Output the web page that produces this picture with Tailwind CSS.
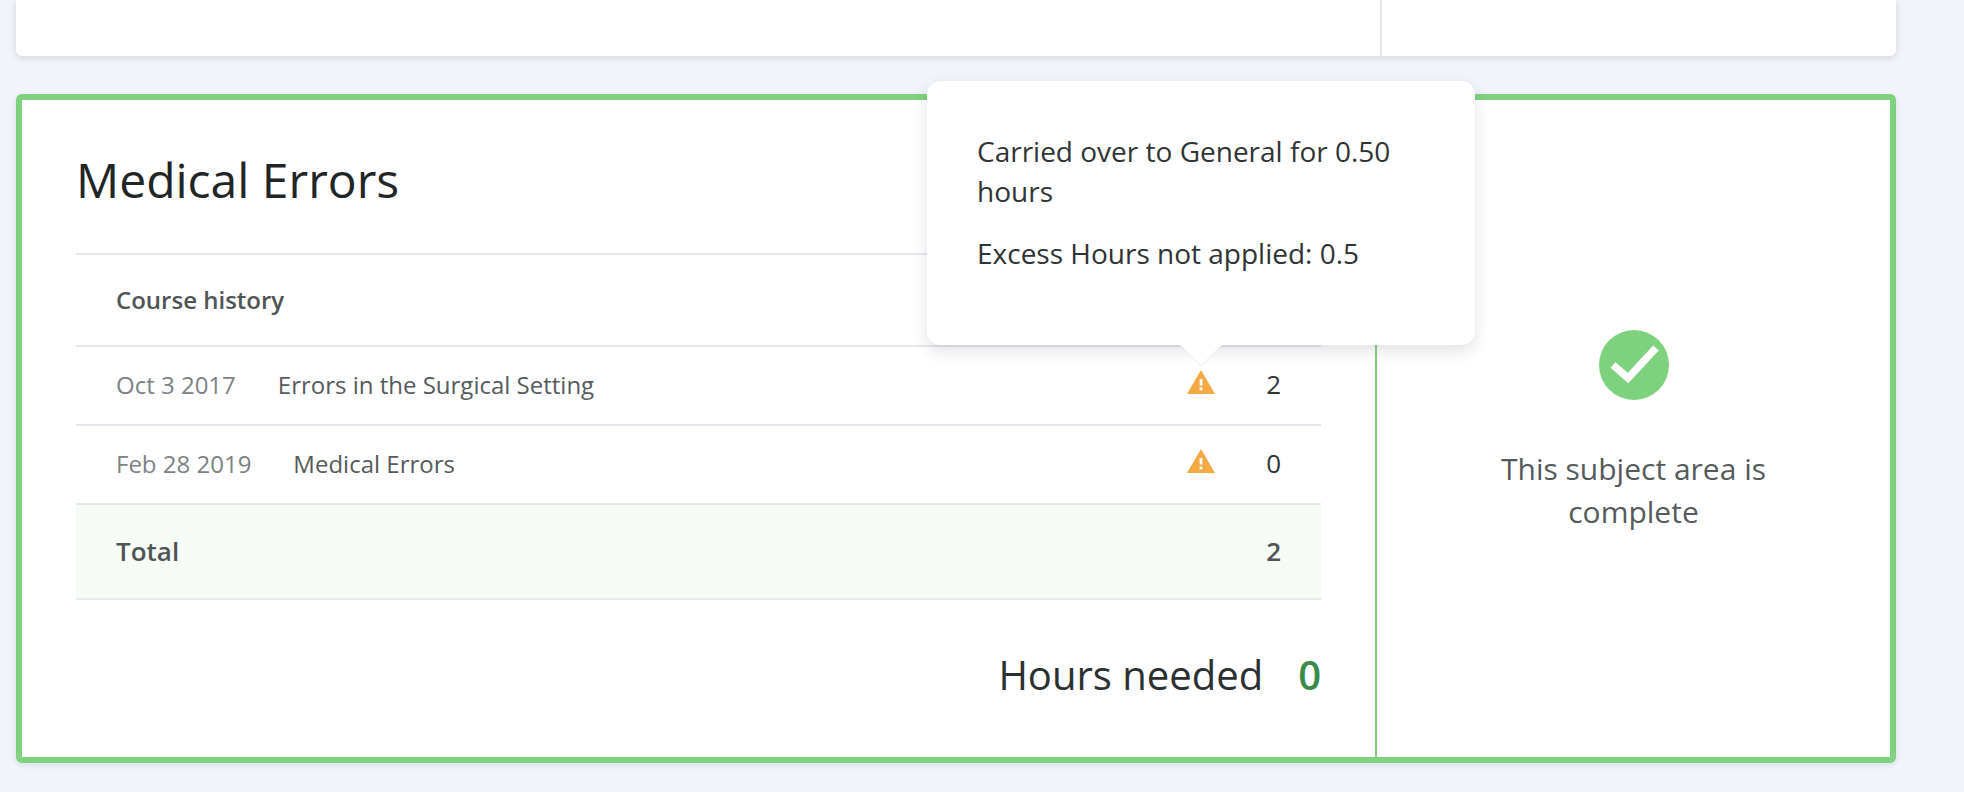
<!DOCTYPE html>
<html lang="en">
  <head>
    <meta charset="UTF-8" />
    <title>Medical Errors</title>
    <script src="https://cdn.jsdelivr.net/npm/@tailwindcss/browser@4"></script>
  </head>
  <body class="bg-[#f1f4f9] font-['Open_Sans',sans-serif] overflow-hidden">
    <div class="pl-4 pr-[68px] pb-[29px]">
      <!-- card above, scrolled off the top -->
      <div class="h-[56px] bg-white rounded-b-md shadow-[0_2px_6px_rgba(50,60,90,0.16)] flex">
        <div class="w-[1366px] border-r-2 border-[#e6e8ee]"></div>
      </div>

      <div class="relative mt-[38px] h-[669px] bg-white border-[6px] border-[#7ed27e] rounded-md shadow-[0_2px_6px_rgba(50,60,90,0.12)] flex">
        <div class="w-[1355px] border-r-2 border-[#7ed27e] px-[54px] shrink-0">
          <h1 class="h-[153px] pt-[49px] text-[48px] leading-[62px] text-[#212526]">Medical Errors</h1>

          <div class="border-t-2 border-[#e6e7ec]">
            <div class="h-[92px] flex items-center pl-10 border-b-2 border-[#e6e7ec] text-[24px] font-semibold text-[#4f5555]">
              Course history
            </div>
            <div class="h-[79px] flex items-center pl-10 pr-10 pb-[2px] border-b-2 border-[#e6e7ec] text-[24px] text-[#555b5b]">
              <span class="text-[#7c8282] mr-[42px]">Oct 3 2017</span>
              <span class="flex-1">Errors in the Surgical Setting</span>
              <svg class="w-[28px] h-[24px] mr-[51px] mb-[6px]" viewBox="0 0 28 24">
                <path d="M14 0 L28 24 H0 Z" fill="#f3a944" />
                <rect x="12.6" y="9" width="2.8" height="6.5" fill="#fff" />
                <rect x="12.6" y="17.5" width="2.8" height="2.8" fill="#fff" />
              </svg>
              <span class="w-[15px] text-right text-[26px] text-[#2f3435]">2</span>
            </div>
            <div class="h-[79px] flex items-center pl-10 pr-10 pb-[2px] border-b-2 border-[#e6e7ec] text-[24px] text-[#555b5b]">
              <span class="text-[#7c8282] mr-[42px]">Feb 28 2019</span>
              <span class="flex-1">Medical Errors</span>
              <svg class="w-[28px] h-[24px] mr-[51px] mb-[6px]" viewBox="0 0 28 24">
                <path d="M14 0 L28 24 H0 Z" fill="#f3a944" />
                <rect x="12.6" y="9" width="2.8" height="6.5" fill="#fff" />
                <rect x="12.6" y="17.5" width="2.8" height="2.8" fill="#fff" />
              </svg>
              <span class="w-[15px] text-right text-[26px] text-[#2f3435]">0</span>
            </div>
            <div class="h-[95px] flex items-center justify-between pl-10 pr-10 border-b-2 border-[#e6e9ea] bg-[#f6fbf6] text-[26px] font-semibold text-[#4f5555]">
              <span>Total</span>
              <span>2</span>
            </div>
          </div>

          <div class="mt-[50px] flex justify-end items-center h-[50px] text-[40px] leading-[50px] text-[#2b3031]">
            <span>Hours needed</span>
            <span class="ml-[35px] font-semibold text-[#3a8a48]">0</span>
          </div>
        </div>

        <div class="flex-1 flex flex-col items-center pt-[230px]">
          <svg class="w-[70px] h-[70px]" viewBox="0 0 70 70">
            <circle cx="35" cy="35" r="35" fill="#7ed27e" />
            <path d="M14 35 L29 48 L57 18" fill="none" stroke="#fff" stroke-width="7.5" />
          </svg>
          <p class="mt-[47px] w-[300px] text-center text-[30px] leading-[43px] text-[#555b5b]">This subject area is complete</p>
        </div>

        <!-- tooltip over the first warning icon -->
        <div class="absolute left-[905px] top-[-19px] z-10 w-[548px] h-[264px] bg-white rounded-[14px] shadow-[0_6px_16px_rgba(40,50,70,0.14)] px-[50px] pt-[50px] text-[28px] leading-[40px] text-[#2f3435]">
          <p>Carried over to General for 0.50 hours</p>
          <p class="mt-[22px]">Excess Hours not applied: 0.5</p>
          <svg class="absolute left-[253px] top-full w-[42px] h-[22px]" viewBox="0 0 42 22">
            <path d="M0 0 L21 21 L42 0" fill="#fff" stroke="#e8e9ed" stroke-width="1" />
          </svg>
        </div>
      </div>
    </div>
  </body>
</html>
